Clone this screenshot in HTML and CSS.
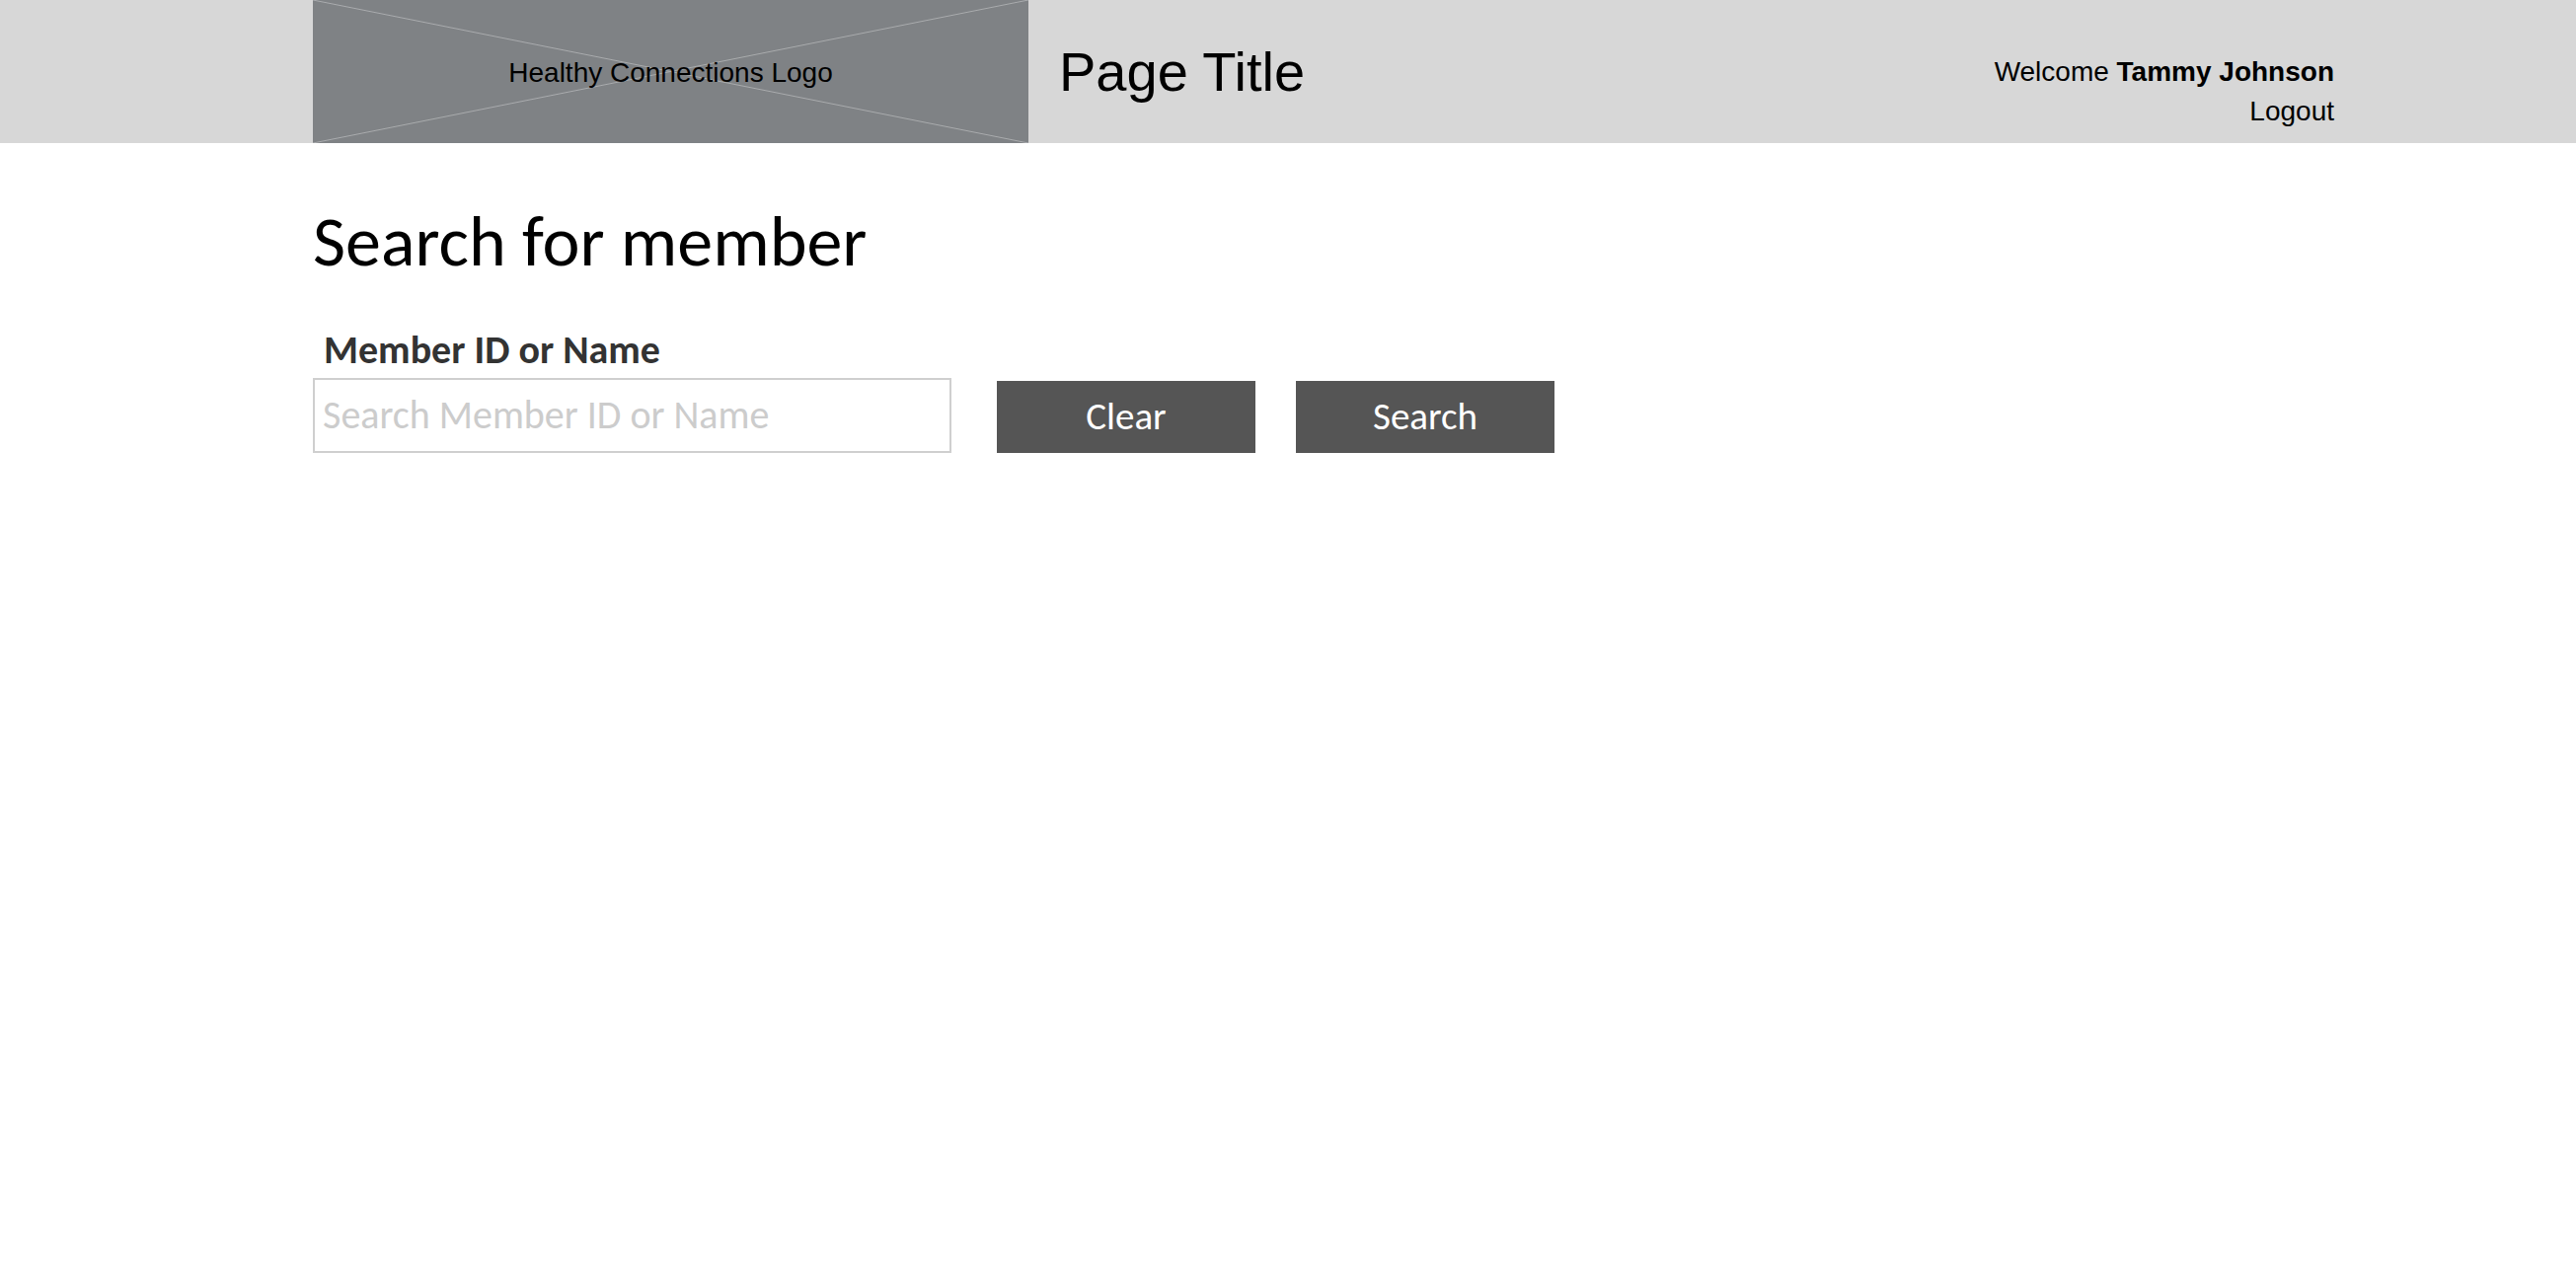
FILE: index.html
```html
<!DOCTYPE html>
<html lang="en">
<head>
<meta charset="utf-8">
<title>Search for member</title>
<link rel="stylesheet" href="styles.css">
</head>
<body>
<header class="topbar">
  <div class="wrap topbar-inner">
    <div class="logo">
      <svg class="logo-x" viewBox="0 0 725 145" preserveAspectRatio="none" aria-hidden="true">
        <line x1="0" y1="0" x2="725" y2="145"/>
        <line x1="0" y1="145" x2="725" y2="0"/>
      </svg>
      <span class="logo-text">Healthy Connections Logo</span>
    </div>
    <h1 class="page-title">Page Title</h1>
    <div class="user">
      <div class="welcome">Welcome <strong>Tammy Johnson</strong></div>
      <a class="logout" href="#">Logout</a>
    </div>
  </div>
</header>
<main class="wrap content">
  <h2 class="heading">Search for member</h2>
  <form class="search-form">
    <label class="field">
      <span class="field-label">Member ID or Name</span>
      <input class="field-input" type="text" placeholder="Search Member ID or Name">
    </label>
    <button type="reset" class="btn btn-clear">Clear</button>
    <button type="submit" class="btn btn-search">Search</button>
  </form>
</main>
</body>
</html>
```
FILE: styles.css
```css
html, body {
  margin: 0;
  padding: 0;
  background: #ffffff;
}

body {
  font-family: "Liberation Sans", Arial, Helvetica, sans-serif;
  color: #000;
}

.wrap {
  margin-left: 317px;
  width: 2048px;
}

.topbar {
  background: #d7d7d7;
  height: 145px;
}

.topbar-inner {
  display: flex;
  height: 145px;
  align-items: center;
}

.logo {
  position: relative;
  width: 725px;
  height: 145px;
  flex: none;
  background: #7f8285;
  display: flex;
  align-items: center;
  justify-content: center;
}

.logo-x {
  position: absolute;
  inset: 0;
  width: 100%;
  height: 100%;
}

.logo-x line {
  stroke: #a9abad;
  stroke-width: 1;
}

.logo-text {
  position: relative;
  top: 1px;
  font-size: 28px;
  color: #000;
}

.page-title {
  margin: 0 0 0 31px;
  font-size: 56px;
  font-weight: normal;
  line-height: normal;
}

.user {
  margin-left: auto;
  align-self: flex-start;
  padding-top: 53px;
  text-align: right;
  font-size: 28px;
  line-height: 40px;
}

.welcome strong {
  font-weight: bold;
}

.logout {
  display: block;
  color: #000;
  text-decoration: none;
}

.content {
  font-family: "Carlito", "Lato", "Open Sans", sans-serif;
  padding-top: 63px;
}

.heading {
  margin: 0;
  font-size: 72px;
  font-weight: normal;
  line-height: 1;
  color: #000;
}

.search-form {
  display: flex;
  align-items: flex-end;
  margin-top: 55px;
}

.field {
  display: flex;
  flex-direction: column;
}

.field-label {
  font-size: 40px;
  font-weight: bold;
  line-height: 1;
  color: #333333;
  padding-left: 11px;
  margin-bottom: 8px;
}

.field-input {
  box-sizing: border-box;
  width: 647px;
  height: 76px;
  margin: 0;
  border: 2px solid #cfcfcf;
  padding: 0 8px 2px;
  font-family: inherit;
  font-size: 40px;
  color: #333;
  background: #fff;
  outline: none;
}

.field-input::placeholder {
  color: #cccccc;
}

.btn {
  box-sizing: border-box;
  width: 262px;
  height: 73px;
  margin: 0;
  border: 0;
  padding: 0 0 2px;
  background: #555555;
  color: #ffffff;
  font-family: inherit;
  font-size: 39px;
  cursor: pointer;
}

.btn-clear {
  margin-left: 46px;
}

.btn-search {
  margin-left: 41px;
}
```
